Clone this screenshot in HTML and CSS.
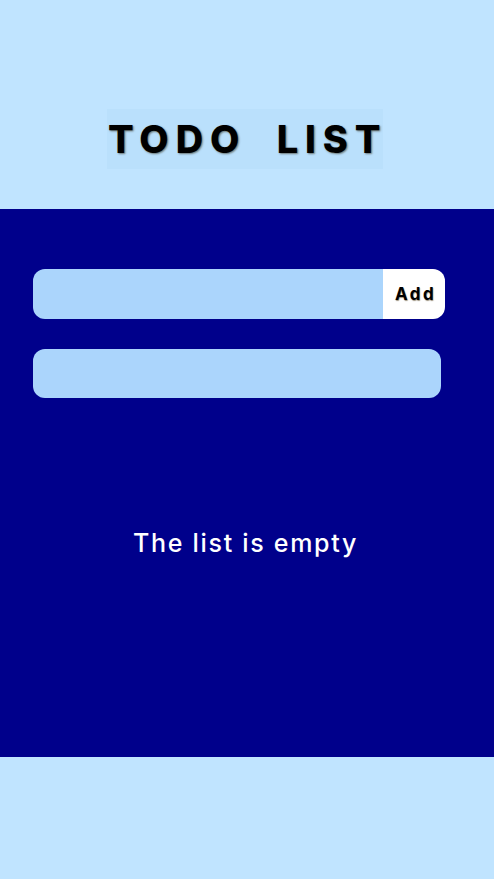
FILE: index.html
```html
<!DOCTYPE html>
<html>
<head>
<meta charset="utf-8">
<link rel="stylesheet" href="styles.css">
</head>
<body>
<header class="top">
  <h1 class="title">TODO&nbsp;&nbsp;LIST</h1>
</header>
<main class="panel">
  <form class="add-form">
    <input class="field add-field" type="text">
    <button class="add-btn" type="button">Add</button>
  </form>
  <input class="field search-field" type="text">
  <p class="empty">The list is empty</p>
</main>
<footer class="bottom"></footer>
</body>
</html>
```
FILE: styles.css
```css
* { box-sizing: border-box; }
html, body { margin: 0; padding: 0; }
body {
  background: #c0e4ff;
  font-family: "Inter", "Lato", sans-serif;
  height: 879px;
  overflow: hidden;
}
.top {
  height: 209px;
  display: flex;
  justify-content: center;
  padding-top: 109px;
}
.title {
  margin: 0 4px 0 0;
  height: 60px;
  width: 276px;
  background: #bae0fc;
  font-family: "Inter", sans-serif;
  font-weight: 800;
  font-size: 38px;
  letter-spacing: 6.9px;
  line-height: 60px;
  text-align: left;
  color: #000;
  text-shadow: 1px 1px 2px rgba(40, 30, 0, 0.55);
  white-space: nowrap;
  padding-left: 1px;
}
.panel {
  background: #00008b;
  height: 548px;
  padding: 60px 0 0 33px;
  display: flex;
  flex-direction: column;
}
.add-form {
  display: flex;
  width: 412px;
  height: 50px;
  margin: 0;
}
.field {
  background: #abd5fc;
  border: none;
  outline: none;
  border-radius: 12px;
  height: 50px;
  font-size: 16px;
}
.add-field {
  width: 350px;
  border-radius: 12px 0 0 12px;
}
.add-btn {
  width: 62px;
  height: 50px;
  background: #fff;
  border: none;
  border-radius: 0 12px 12px 0;
  font-family: "Inter", sans-serif;
  font-weight: 700;
  font-size: 17px;
  letter-spacing: 2.5px;
  color: #000;
  text-shadow: 0.5px 0.5px 1px rgba(60, 40, 0, 0.5);
  padding: 0 0 0 3px;
}
.search-field {
  margin-top: 30px;
  width: 408px;
  height: 49px;
}
.empty {
  margin: 129px 0 0 0;
  width: 425px;
  text-align: center;
  color: #fff;
  font-family: "Inter", sans-serif;
  font-size: 25px;
  font-weight: 500;
  letter-spacing: 1.7px;
  line-height: 32px;
}
.bottom { height: 122px; }
```
